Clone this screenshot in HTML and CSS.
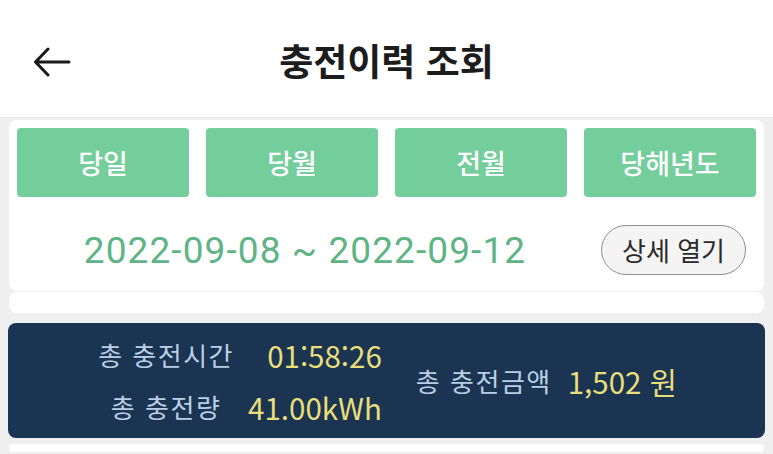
FILE: index.html
```html
<!DOCTYPE html>
<html lang="ko">
<head>
<meta charset="utf-8">
<title>충전이력 조회</title>
<link rel="stylesheet" href="styles.css">
</head>
<body>
<header class="topbar">
  <span class="back" aria-label="뒤로">
    <svg width="38" height="30" viewBox="0 0 38 30"><path d="M36 15H3M15 2L2.5 15L15 28" fill="none" stroke="#1a1a1a" stroke-width="3" stroke-linecap="round" stroke-linejoin="round"/></svg>
  </span>
  <h1 class="title">충전이력 조회</h1>
</header>
<main class="content">
  <section class="card filter">
    <div class="tabs">
      <button class="tab">당일</button>
      <button class="tab">당월</button>
      <button class="tab">전월</button>
      <button class="tab">당해년도</button>
    </div>
    <div class="range-row">
      <span class="range">2022-09-08 ~ 2022-09-12</span>
      <button class="detail">상세 열기</button>
    </div>
  </section>
  <div class="card strip"></div>
  <section class="summary">
    <div class="sum-grid">
      <span class="label">총 충전시간</span><span class="value">01:58:26</span>
      <span class="label">총 충전량</span><span class="value">41.00kWh</span>
    </div>
    <div class="sum-side">
      <span class="label">총 충전금액</span><span class="value">1,502 원</span>
    </div>
  </section>
  <div class="card next"></div>
</main>
</body>
</html>
```
FILE: styles.css
```css
* { box-sizing: border-box; }
html, body { margin: 0; padding: 0; }
html { height: 454px; overflow: hidden; }
body {
  width: 773px;
  height: 454px;
  overflow: hidden;
  background: #efefef;
  font-family: "Noto Sans CJK KR", "Noto Sans", sans-serif;
}
.topbar {
  height: 118px;
  background: #ffffff;
  position: relative;
  display: flex;
  align-items: center;
  justify-content: center;
  border-bottom: 1px solid #e6e6e6;
}
.back {
  position: absolute;
  left: 33px;
  top: 47px;
  display: block;
  width: 38px;
  height: 30px;
}
.back svg { display: block; }
.title {
  margin: 0;
  font-size: 37px;
  font-weight: 700;
  color: #1c1c1c;
  line-height: 1;
  padding-top: 4px;
}
.content {
  padding: 2px 8px 0 8px;
  display: flex;
  flex-direction: column;
}
.card {
  background: #ffffff;
  border-radius: 8px;
  margin: 0 1px;
}
.filter {
  padding: 8px 8px 0 8px;
  height: 171px;
}
.tabs {
  display: grid;
  grid-template-columns: repeat(4, 1fr);
  column-gap: 17px;
}
.tab {
  height: 69px;
  border: none;
  border-radius: 4px;
  background: #74ce9b;
  color: #ffffff;
  font-family: "Noto Sans CJK KR", sans-serif;
  font-size: 27px;
  font-weight: 500;
  padding: 0;
}
.range-row {
  display: flex;
  align-items: center;
  height: 94px;
  padding-top: 12px;
}
.range {
  flex: 1;
  text-align: center;
  font-family: Roboto, "Noto Sans", sans-serif;
  font-size: 37px;
  color: #5fb485;
  letter-spacing: 1.1px;
  padding-right: 8px;
}
.detail {
  width: 145px;
  height: 50px;
  margin-right: 10px;
  border: 1.5px solid #8e8e8e;
  border-radius: 25px;
  background: #f4f4f4;
  color: #2a2a2a;
  font-family: "Noto Sans CJK KR", sans-serif;
  font-size: 26px;
  padding: 0 0 2px 0;
}
.strip {
  height: 21px;
  margin-top: 1px;
}
.summary {
  margin-top: 10px;
  height: 115px;
  background: #1b3452;
  border-radius: 8px;
  display: flex;
  align-items: center;
  justify-content: center;
  column-gap: 34px;
  padding-left: 2px;
}
.sum-grid {
  display: grid;
  grid-template-columns: auto auto;
  column-gap: 14px;
  row-gap: 14px;
  align-items: center;
}
.sum-grid .label { text-align: center; }
.sum-grid .value { text-align: right; }
.sum-side {
  display: flex;
  align-items: center;
  column-gap: 16px;
}
.label {
  color: #b9cfe4;
  font-size: 26px;
  letter-spacing: 1.5px;
  line-height: 38px;
}
.value {
  color: #e8df7a;
  font-size: 29.5px;
  line-height: 38px;
}
.next {
  margin-top: 6px;
  height: 8px;
}
```
